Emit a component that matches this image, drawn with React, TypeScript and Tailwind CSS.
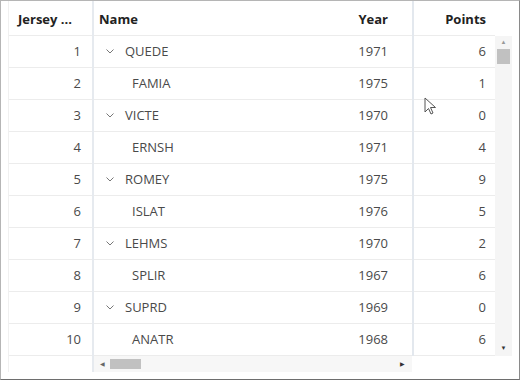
import React from "react";

type Row = { jersey: number; name: string; year: number; points: number; parent: boolean };

const rows: Row[] = [
  { jersey: 1, name: "QUEDE", year: 1971, points: 6, parent: true },
  { jersey: 2, name: "FAMIA", year: 1975, points: 1, parent: false },
  { jersey: 3, name: "VICTE", year: 1970, points: 0, parent: true },
  { jersey: 4, name: "ERNSH", year: 1971, points: 4, parent: false },
  { jersey: 5, name: "ROMEY", year: 1975, points: 9, parent: true },
  { jersey: 6, name: "ISLAT", year: 1976, points: 5, parent: false },
  { jersey: 7, name: "LEHMS", year: 1970, points: 2, parent: true },
  { jersey: 8, name: "SPLIR", year: 1967, points: 6, parent: false },
  { jersey: 9, name: "SUPRD", year: 1969, points: 0, parent: true },
  { jersey: 10, name: "ANATR", year: 1968, points: 6, parent: false },
];

function Chevron() {
  return (
    <svg width="8" height="5" viewBox="0 0 8 5" className="shrink-0">
      <path d="M0.5 0.5 L4 4 L7.5 0.5" fill="none" stroke="#777" strokeWidth="1" />
    </svg>
  );
}

function Cursor() {
  return (
    <svg width="14" height="20" viewBox="0 0 14 20" className="absolute left-[423px] top-[96px]">
      <path d="M1 1 L1 15 L4.5 11.5 L7 17 L9 16 L6.5 10.5 L11.5 10.5 Z" fill="white" stroke="#555" strokeWidth="1" strokeLinejoin="round" />
    </svg>
  );
}

const line = "border-b border-[#ececec]";

export default function App() {
  return (
    <div
      className="relative h-[380px] w-[520px] overflow-hidden border border-[#b5b5b5] border-b-[#6e6e6e] border-r-[#8a8a8a] bg-white text-[13px] text-[#4a4a4a]"
      style={{ fontFamily: '"Open Sans", "Noto Sans", sans-serif' }}
    >
      <div className="flex pl-[7px]">
        {/* frozen left column */}
        <div className="w-[84px] border-l border-[#f0f0f0]">
          <div className={`flex h-[35px] items-center pl-[9px] pt-[3px] font-bold text-[#222] ${line}`}>Jersey ...</div>
          {rows.map((r) => (
            <div key={r.jersey} className={`flex h-[32px] items-center justify-end pr-[11px] ${line}`}>
              {r.jersey}
            </div>
          ))}
        </div>

        {/* scrolling middle */}
        <div className="flex w-[320px] flex-col border-l-2 border-[#e6eaef]">
          <div className={`flex h-[35px] items-center pt-[3px] font-bold text-[#222] ${line}`}>
            <div className="flex-1 pl-[5px]">Name</div>
            <div className="pr-[24px]">Year</div>
          </div>
          {rows.map((r) => (
            <div key={r.jersey} className={`flex h-[32px] items-center ${line}`}>
              <div className="flex flex-1 items-center">
                {r.parent ? (
                  <>
                    <span className="ml-[12px] mr-[11px] flex">
                      <Chevron />
                    </span>
                    {r.name}
                  </>
                ) : (
                  <span className="ml-[38px]">{r.name}</span>
                )}
              </div>
              <div className="pr-[24px]">{r.year}</div>
            </div>
          ))}
          {/* horizontal scrollbar */}
          <div className="flex h-[16px] items-center bg-[#f7f7f7]">
            <span className="ml-[6px] text-[6px] text-[#666]">◀</span>
            <div className="ml-[5px] h-[10px] w-[31px] bg-[#c1c1c1]" />
            <div className="flex-1" />
            <span className="mr-[7px] text-[6px] text-[#333]">▶</span>
          </div>
        </div>

        {/* frozen right column */}
        <div className="w-[83px] self-start border-l-2 border-[#e3e8ee]">
          <div className={`flex h-[35px] items-center justify-end pr-[9px] pt-[3px] font-bold text-[#222] ${line}`}>Points</div>
          {rows.map((r) => (
            <div key={r.jersey} className={`flex h-[32px] items-center justify-end pr-[9px] ${line}`}>
              {r.points}
            </div>
          ))}
        </div>

        {/* vertical scrollbar */}
        <div className="mt-[35px] flex h-[320px] w-[17px] flex-col items-center bg-[#f5f5f5]">
          <span className="mt-[2px] text-[6px] leading-[8px] text-[#999]">▲</span>
          <div className="mt-[3px] h-[15px] w-[13px] bg-[#c1c1c1]" />
          <div className="flex-1" />
          <span className="mb-[4px] text-[6px] leading-[8px] text-[#333]">▼</span>
        </div>
      </div>
      <Cursor />
    </div>
  );
}
